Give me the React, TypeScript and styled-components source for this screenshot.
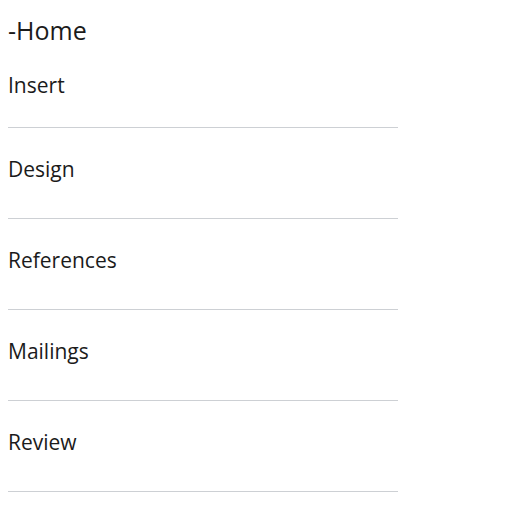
import styled, { createGlobalStyle } from "styled-components";

const GlobalStyle = createGlobalStyle`
  body {
    margin: 0;
    background: #ffffff;
    font-family: "Open Sans", "Noto Sans", sans-serif;
    color: #1b1b1b;
  }
`;

const Menu = styled.nav`
  width: 390px;
  padding: 14px 0 0 8px;
`;

const Title = styled.div`
  font-size: 25px;
  line-height: 32px;
  margin-bottom: 25px;
`;

const Item = styled.div<{ $first?: boolean }>`
  font-size: 21px;
  line-height: 28px;
  padding: ${(p) => (p.$first ? "0 0 28px" : "27px 0 35px")};
  border-bottom: 1px solid #cdd0d4;
`;

const items = ["Insert", "Design", "References", "Mailings", "Review"];

const App = () => {
  return (
    <>
      <GlobalStyle />
      <Menu>
        <Title>-Home</Title>
        {items.map((label, i) => (
          <Item key={label} $first={i === 0}>
            {label}
          </Item>
        ))}
      </Menu>
    </>
  );
};

export default App;
